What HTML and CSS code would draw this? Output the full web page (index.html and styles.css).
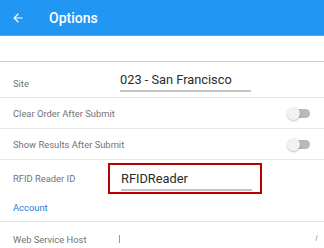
FILE: index.html
```html
<!DOCTYPE html>
<html>
<head>
  <meta charset="UTF-8">
  <link rel="stylesheet" href="styles.css">
  <title>Options</title>
</head>
<body>
  <div class="app-bar">
    <svg class="back" width="14" height="14" viewBox="0 0 24 24">
      <path d="M20 11H7.83l5.59-5.59L12 4l-8 8 8 8 1.41-1.41L7.83 13H20v-2z" fill="#fff"/>
    </svg>
    <span class="app-title">Options</span>
  </div>

  <div class="settings">
    <div class="row row-input">
      <span class="label">Site</span>
      <div class="field"><span class="value">023 - San Francisco</span></div>
    </div>
    <div class="row row-toggle">
      <span class="label">Clear Order After Submit</span>
      <span class="toggle"><span class="thumb"></span></span>
    </div>
    <div class="row row-toggle">
      <span class="label">Show Results After Submit</span>
      <span class="toggle"><span class="thumb"></span></span>
    </div>
    <div class="row row-rfid">
      <span class="label">RFID Reader ID</span>
      <div class="highlight">
        <div class="field"><span class="value">RFIDReader</span></div>
      </div>
    </div>
    <div class="section-head">Account</div>
    <div class="row row-host">
      <span class="label">Web Service Host</span>
      <span class="caret"></span>
      <span class="tick"></span>
    </div>
  </div>
</body>
</html>
```

FILE: styles.css
```css
body {
  margin: 0;
  background: #fff;
  font-family: Roboto, "Liberation Sans", sans-serif;
  overflow: hidden;
}

.app-bar {
  height: 36px;
  background-color: #2196f3;
  border-bottom: 1px solid #4aa8f5;
  box-sizing: border-box;
  display: flex;
  align-items: center;
  padding-left: 11px;
}

.back {
  display: block;
}

.app-title {
  margin-left: 24px;
  color: #fff;
  font-size: 14px;
  font-weight: 500;
}

.settings {
  margin-top: 25px;
  border-top: 1px solid #b9d4ee;
}

.row {
  display: flex;
  align-items: center;
  border-bottom: 1px solid #e8e8e8;
  padding-left: 13px;
}

.label {
  color: #737373;
  font-size: 9.4px;
}

.row-input {
  height: 36px;
  align-items: flex-end;
  padding-bottom: 5px;
  box-sizing: border-box;
}

.row-input .label {
  margin-bottom: 3px;
}

.row-input .label,
.row-rfid .label,
.row-host .label {
  width: 95px;
  flex: none;
}

.row-input .field {
  margin-left: 12px;
}

.field {
  width: 131px;
  border-bottom: 2px solid #c4c4c4;
  padding-bottom: 2px;
  margin-top: 4px;
}

.value {
  color: #2b2b2b;
  font-size: 12.8px;
}

.row-toggle {
  height: 30px;
  justify-content: space-between;
  padding-right: 14px;
}

.toggle {
  position: relative;
  width: 22px;
  height: 9px;
  border-radius: 5px;
  background: #b9b9b9;
}

.thumb {
  position: absolute;
  left: -1px;
  top: -2px;
  width: 13px;
  height: 13px;
  border-radius: 50%;
  background: #f2f2f2;
  box-shadow: 0 1px 2px rgba(0, 0, 0, 0.25);
}

.row-rfid {
  height: 36px;
  border-bottom: none;
}

.highlight {
  border: 2px solid #b80000;
  width: 154px;
  height: 31px;
  box-sizing: border-box;
  padding-left: 11px;
  display: flex;
  align-items: center;
}

.highlight .field {
  margin-top: 2px;
}

.section-head {
  color: #2a7ed4;
  font-size: 9.4px;
  padding: 6px 13px 8px;
  border-bottom: 1px solid #dbe5ee;
}

.row-host {
  height: 34px;
  border-bottom: none;
  position: relative;
}

.caret {
  width: 1px;
  height: 8px;
  background: #9a9a9a;
  margin-left: 11px;
}

.tick {
  position: absolute;
  right: 7px;
  top: 13px;
  width: 1px;
  height: 6px;
  background: #b0b0b0;
  transform: rotate(15deg);
}
```
